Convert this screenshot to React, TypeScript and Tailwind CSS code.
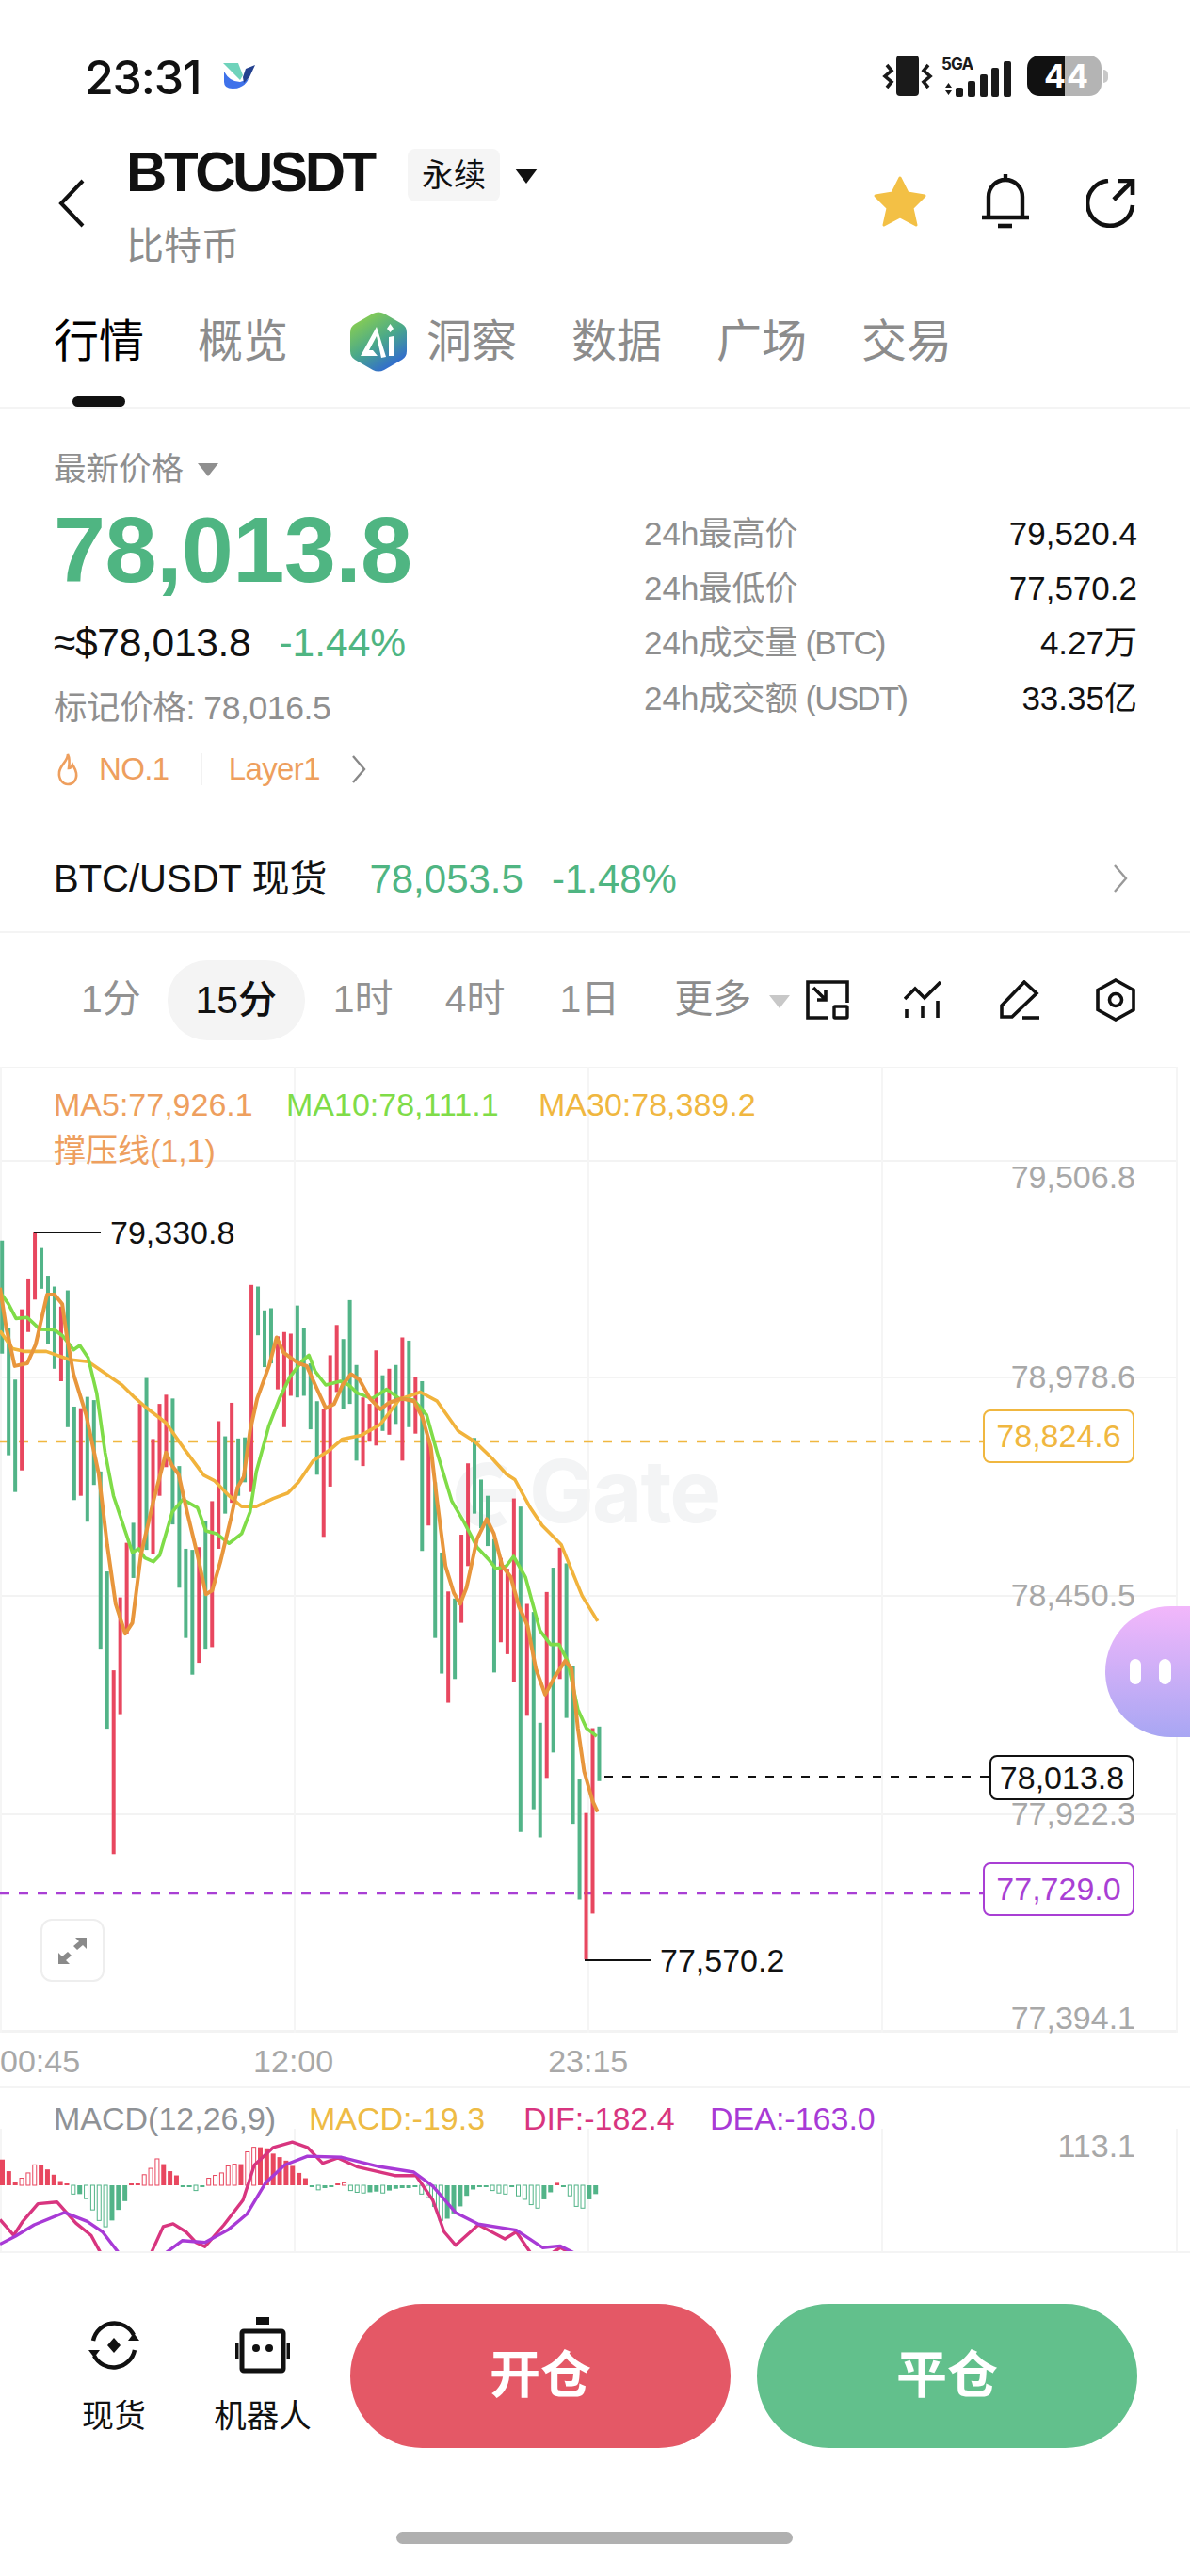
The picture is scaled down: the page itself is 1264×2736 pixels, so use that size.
import React from "react";

type Pt = [number, number];

const GREEN = "#52b488";
const RED = "#e8475f";

// x index is derived from the slot, values are [colour, top, bottom] read off the reference
const candles: [string, number, number][] = [
  ["g",118,327],["g",280,515],["g",375,583],["r",245,543],["r",188,287],["r",103,227],["g",130,207],["g",183,310],
  ["g",203,355],["r",240,378],["g",210,463],["g",425,598],["r",428,590],["g",407,638],["g",413,570],["g",545,873],
  ["g",730,1021],["r",913,1253],["r",778,994],["r",677,845],["g",640,742],["r",420,690],["g",372,690],["r",485,697],
  ["r",420,590],["r",403,537],["g",410,643],["g",535,760],["g",688,853],["g",690,921],["r",685,899],["g",637,873],
  ["r",600,870],["r",452,688],["g",480,623],["r",418,603],["g",484,590],["g",482,565],["r",200,583],["g",203,293],
  ["g",247,352],["g",243,345],["r",295,393],["r",287,463],["r",290,405],["g",238,408],["g",280,405],["g",345,467],
  ["g",415,551],["r",430,666],["r",330,573],["r",274,398],["g",300,429],["g",228,420],["g",348,525],["r",408,535],
  ["r",420,490],["r",321,497],["g",367,470],["r",355,477],["g",348,457],["r",297,525],["g",303,463],["r",370,475],
  ["g",378,692],["r",485,645],["g",565,853],["g",695,919],["r",767,973],["g",780,929],["r",662,825],["r",530,720],
  ["g",483,623],["g",560,650],["g",590,683],["g",670,917],["r",705,861],["r",725,883],["r",595,935],["g",610,1212],
  ["r",790,997],["g",805,1170],["g",1010,1222],["r",768,1112],["g",723,1065],["r",686,929],["g",715,1001],["g",905,1197],
  ["g",1115,1337],["r",1177,1448],["r",1020,1363],["g",1017,1118],
];

const ma5: Pt[] = [[0,205],[15,280],[35,350],[65,345],[85,310],[112,218],[130,218],[148,235],[160,300],[175,365],[205,440],[235,550],[255,680],[275,790],[298,845],[315,825],[335,700],[365,600],[395,510],[410,535],[425,550],[445,620],[470,700],[490,772],[505,765],[525,710],[550,630],[565,575],[580,555],[595,470],[612,410],[640,350],[658,297],[675,325],[710,345],[730,350],[750,385],[775,428],[795,420],[815,385],[835,365],[855,375],[880,410],[905,430],[925,418],[955,410],[985,415],[1005,445],[1025,500],[1040,600],[1060,720],[1080,770],[1095,790],[1110,760],[1135,670],[1158,633],[1175,660],[1195,720],[1215,740],[1235,795],[1255,830],[1275,910],[1297,958],[1320,925],[1345,895],[1360,910],[1375,1020],[1390,1100],[1410,1155],[1422,1175]];
const ma10: Pt[] = [[0,213],[20,235],[38,262],[65,260],[95,282],[130,283],[150,295],[175,320],[190,312],[210,335],[230,400],[250,510],[270,590],[300,660],[315,695],[330,688],[345,705],[365,712],[380,700],[410,620],[435,597],[470,612],[490,655],[515,660],[545,678],[575,660],[595,620],[610,545],[640,460],[665,410],[690,370],[720,340],[735,330],[750,360],[775,385],[810,378],[830,385],[850,400],[885,410],[920,393],[950,410],[985,413],[1015,440],[1040,510],[1075,600],[1105,640],[1135,685],[1165,710],[1180,725],[1205,720],[1222,702],[1250,740],[1285,840],[1310,865],[1330,865],[1350,895],[1375,985],[1395,1020],[1420,1035]];
const ma30: Pt[] = [[0,285],[30,318],[60,323],[110,323],[165,338],[210,342],[240,358],[290,385],[320,408],[345,425],[395,455],[440,505],[485,552],[510,562],[545,590],[575,610],[610,610],[650,595],[685,585],[710,565],[745,525],[785,505],[815,485],[860,478],[905,458],[950,412],[1000,398],[1040,415],[1090,470],[1130,490],[1170,520],[1205,550],[1225,560],[1260,610],[1290,645],[1335,680],[1385,775],[1422,822]];

const hist = [73,40,10,20,35,58,58,45,30,12,5,-25,-25,-38,-70,-100,-118,-100,-70,-45,5,5,30,48,75,60,40,28,-3,-3,-15,-1,20,28,35,55,60,60,95,108,108,105,90,80,70,55,35,20,-3,-13,-8,-3,3,7,-15,-20,-22,-20,-18,-22,-15,-10,-8,-8,-5,-25,-35,-60,-100,-95,-80,-60,-30,-12,-5,-3,-15,-22,-25,-5,-30,-40,-55,-65,-40,-20,7,-1,-30,-60,-65,-40,-25];

const difA: Pt[] = [[0,555],[18,600],[30,560],[50,510],[75,505],[100,565],[120,600],[135,660]];
const difB: Pt[] = [[197,660],[215,575],[228,567],[245,590],[258,620],[270,632],[295,570],[320,500],[335,400],[360,350],[385,335],[405,350],[425,395],[445,380],[470,405],[520,430],[548,430],[570,500],[585,590],[600,628],[630,570],[665,610],[680,590],[702,660]];
const difC: Pt[] = [[720,660],[738,635],[760,660]];
const deaA: Pt[] = [[0,625],[20,603],[45,570],[85,535],[115,560],[135,590],[160,660]];
const deaB: Pt[] = [[212,660],[240,615],[270,620],[300,585],[325,540],[350,450],[375,400],[405,375],[450,378],[500,405],[545,420],[570,460],[600,535],[630,568],[680,585],[715,635],[738,630],[765,660]];

// reference crop coords to chart px (chart box starts at y=1133)
const cx = (x: number) => x / 2.24;
const cy = (y: number) => 117 + y / 1.742;
const chartLine = (p: Pt[]) => p.map(([x, y]) => `${cx(x).toFixed(1)},${cy(y).toFixed(1)}`).join(" ");
// same for the MACD panel (starts at y=2218)
const macdLine = (p: Pt[]) => p.map(([x, y]) => `${(x / 1.24).toFixed(1)},${(y / 2.676 - 68).toFixed(1)}`).join(" ");

const Tab: React.FC<{ label: string; className: string; active?: boolean }> = ({ label, className, active }) => (
  <span className={`text-[48px] leading-[64px] ${active ? "text-black" : "text-[#8c8c8c]"} ${className}`}>{label}</span>
);

const StatRow: React.FC<{ label: string; unit?: string; value: string }> = ({ label, unit, value }) => (
  <div className="flex justify-between items-center h-[58.3px] text-[35px]">
    <span className="text-[#8f8f8f]">
      {label}
      {unit && <span className="ml-[8px] tracking-[-1.8px]">{unit}</span>}
    </span>
    <span className="text-[#111]">{value}</span>
  </div>
);

const Chevron: React.FC<{ className: string; color: string }> = ({ className, color }) => (
  <svg viewBox="0 0 16 32" className={className} fill="none" stroke={color} strokeWidth="2.4">
    <path d="M2 2 L14 16 L2 30" />
  </svg>
);

const StatusBar: React.FC = () => (
  <div className="h-[140px] flex items-start pt-[60px] pl-[90px]">
    <span className="text-[50px] leading-[44px] font-medium tracking-[-1.2px] text-[#111] font-['Inter',sans-serif]">23:31</span>
    <svg viewBox="0 0 36 28" className="w-[36px] h-[28px] ml-[22px] mt-[7px]">
      <path d="M3 9 L3 20 Q3 27 12 27 Q24 27 29 17 L20 20 Q9 20 3 9Z" fill="#3f72ea" />
      <path d="M23 15 L26 6 L36 2 L30 15 L24 21Z" fill="#24418f" />
      <path d="M2 0 H18 L23 13 L20 18Z" fill="#6fd3bb" />
    </svg>
    <div className="ml-auto flex items-start mr-[87px]">
      <svg viewBox="0 0 54 44" className="w-[54px] h-[44px] mt-[-1px]">
        <rect x="15" y="0" width="24" height="43" rx="4" fill="#1a1a1a" />
        <path d="M5 10 L10 16 L3 22 L10 28 L5 34" fill="none" stroke="#1a1a1a" strokeWidth="3.6" />
        <path d="M49 10 L44 16 L51 22 L44 28 L49 34" fill="none" stroke="#1a1a1a" strokeWidth="3.6" />
      </svg>
      <div className="relative w-[76px] h-[44px] ml-[9px]">
        <span className="absolute left-0 top-[-1px] text-[17px] leading-[18px] font-bold text-[#1a1a1a] font-['Inter',sans-serif] tracking-[-0.8px]">5GA</span>
        <svg viewBox="0 0 76 44" className="w-[76px] h-[44px]">
          <path d="M4 33 H11 L7.5 28Z M4 36 H11 L7.5 41Z" fill="#1a1a1a" />
          <rect x="15" y="33" width="8" height="10" rx="2" fill="#1a1a1a" />
          <rect x="28" y="26" width="8" height="17" rx="2" fill="#1a1a1a" />
          <rect x="41" y="19" width="8" height="24" rx="2" fill="#1a1a1a" />
          <rect x="53" y="12" width="8" height="31" rx="2" fill="#1a1a1a" />
          <rect x="66" y="5" width="8" height="38" rx="2" fill="#1a1a1a" />
        </svg>
      </div>
      <div className="relative ml-[15px] w-[79px] h-[43px] rounded-[13px] overflow-hidden flex mt-[-1px]">
        <div className="w-[40px] bg-[#111]" />
        <div className="flex-1 bg-[#b4b4b4]" />
        <span className="absolute inset-0 pl-[18px] text-[34px] leading-[43px] font-bold text-white font-['Inter',sans-serif] tracking-[1px]">44</span>
      </div>
      <div className="w-[5px] h-[14px] mt-[14px] ml-[2px] rounded-r-full bg-[#c8c8c8]" />
    </div>
  </div>
);

const Header: React.FC = () => (
  <div className="h-[160px] flex items-start pl-[62px]">
    <svg viewBox="0 0 28 52" className="w-[28px] h-[52px] mt-[50px]" fill="none" stroke="#111" strokeWidth="4">
      <path d="M26 2 L3 26 L26 50" />
    </svg>
    <div className="ml-[44px] flex flex-col">
      <div className="flex items-center h-[56px] mt-[18px]">
        <span className="w-[264px] mt-[-7px] whitespace-nowrap text-[60px] leading-[56px] font-bold text-[#111] tracking-[-3.4px]">BTCUSDT</span>
        <span className="ml-[35px] w-[98px] h-[56px] rounded-lg bg-[#f5f5f5] text-[34px] leading-[56px] text-center text-[#111]">永续</span>
        <div className="ml-[16px] mt-[2px] w-0 h-0 border-x-[12px] border-x-transparent border-t-[16px] border-t-[#111]" />
      </div>
      <span className="text-[40px] leading-[50px] mt-[22px] text-[#8c8c8c]">比特币</span>
    </div>
    <div className="ml-auto mr-[58px] mt-[46px] flex items-start">
      <svg viewBox="0 0 58 56" className="w-[58px] h-[56px]">
        <path d="M29 3 L37 19 L55 22 L42 35 L46 53 L29 44 L12 53 L16 35 L3 22 L21 19Z" fill="#f3c045" stroke="#f3c045" strokeWidth="3" strokeLinejoin="round" />
      </svg>
      <svg viewBox="0 0 50 58" className="w-[50px] h-[58px] ml-[58px] mt-[-1px]" fill="none" stroke="#111" strokeWidth="4.4">
        <path d="M25 0 V6 M7 46 V24 A18 18 0 0 1 43 24 V46 M0 46 H50" />
        <path d="M17 55 H32" strokeWidth="4.6" />
      </svg>
      <svg viewBox="0 0 52 52" className="w-[52px] h-[52px] ml-[61px] mt-[4px]" fill="none" stroke="#111" strokeWidth="4.6">
        <path d="M23 2 A24 24 0 1 0 49 28" />
        <path d="M29 22 L48 3 M33 2 H49 V17" />
      </svg>
    </div>
  </div>
);

const Tabs: React.FC = () => (
  <div className="relative h-[134px] border-b-[2px] border-[#f4f4f4] flex items-start pt-[31px] pl-[57px]">
    <Tab label="行情" className="" active />
    <Tab label="概览" className="ml-[57px]" />
    <svg viewBox="0 0 60 64" className="w-[60px] h-[64px] ml-[66px]">
      <defs>
        <linearGradient id="ai" x1="0.2" y1="0" x2="0.8" y2="1">
          <stop offset="0" stopColor="#8fd24c" />
          <stop offset="0.5" stopColor="#4aa88a" />
          <stop offset="1" stopColor="#2c5fdc" />
        </linearGradient>
      </defs>
      <path d="M24 2 Q30 -1 36 2 L55 13 Q60 16 60 22 L60 42 Q60 48 55 51 L36 62 Q30 65 24 62 L5 51 Q0 48 0 42 L0 22 Q0 16 5 13Z" fill="url(#ai)" />
      <path d="M28 16 L11 47 L29 47 L24 41 L20 41 L28 26 L33 49 L38 48Z" fill="#fff" />
      <path d="M41 27 L46 26 L46 47 L41 47Z M42.5 13 L46 18 L42.5 22 L39 18Z" fill="#fff" />
    </svg>
    <Tab label="洞察" className="ml-[21px]" />
    <Tab label="数据" className="ml-[58px]" />
    <Tab label="广场" className="ml-[58px]" />
    <Tab label="交易" className="ml-[58px]" />
    <div className="absolute left-[77px] bottom-0 w-[56px] h-[11px] rounded-full bg-[#111]" />
  </div>
);

const Market: React.FC = () => (
  <div className="h-[557px] border-b-[2px] border-[#f4f4f4] flex flex-col">
    <div className="flex h-[405px] px-[57px] pr-[56px]">
      <div className="w-[627px] flex flex-col">
        <div className="flex items-center h-[40px] mt-[45px]">
          <span className="text-[34.5px] text-[#8f8f8f]">最新价格</span>
          <div className="ml-[15px] w-0 h-0 border-x-[11px] border-x-transparent border-t-[14px] border-t-[#8f8f8f]" />
        </div>
        <div className="h-[90px] mt-[20px] text-[99px] leading-[90px] font-bold tracking-[-0.6px] text-[#4fb582]">78,013.8</div>
        <div className="flex items-center h-[50px] mt-[29px] text-[42.5px]">
          <span className="text-[#111] tracking-[-0.3px]">≈$78,013.8</span>
          <span className="ml-[30px] text-[#4fb582]">-1.44%</span>
        </div>
        <div className="h-[44px] mt-[22px] text-[35.5px] leading-[44px] tracking-[-0.4px] text-[#8f8f8f]">标记价格: 78,016.5</div>
        <div className="flex items-center h-[44px] mt-[21px] text-[33px] text-[#ee9f5e]">
          <svg viewBox="0 0 24 36" className="w-[24px] h-[36px] ml-[3px]" fill="none" stroke="#ee9f5e" strokeWidth="2.6">
            <path d="M12 2 C12 10 4 13 3 21 C2 29 7 34 12 34 C18 34 22 29 21 22 C20.5 18 18 15 17 13 C16 16 14 17 13 17 C14 11 14 6 12 2Z" />
          </svg>
          <span className="ml-[21px] tracking-[-0.6px]">NO.1</span>
          <div className="ml-[33px] w-[2px] h-[34px] bg-[#f2f2f2]" />
          <span className="ml-[28px] tracking-[-0.6px]">Layer1</span>
          <Chevron className="w-[16px] h-[32px] ml-[33px]" color="#888" />
        </div>
      </div>
      <div className="w-[524px] pt-[104px]">
        <StatRow label="24h最高价" value="79,520.4" />
        <StatRow label="24h最低价" value="77,570.2" />
        <StatRow label="24h成交量" unit="(BTC)" value="4.27万" />
        <StatRow label="24h成交额" unit="(USDT)" value="33.35亿" />
      </div>
    </div>
    <div className="mt-[38px] h-[112px] flex items-center pl-[57px] pr-[66px] text-[42px]">
      <span className="text-[#111] text-[40px]">BTC/USDT 现货</span>
      <span className="ml-[45px] text-[#4fb582]">78,053.5</span>
      <span className="ml-[30px] text-[#4fb582]">-1.48%</span>
      <Chevron className="ml-auto w-[16px] h-[32px]" color="#999" />
    </div>
  </div>
);

const Periods: React.FC = () => (
  <div className="h-[142px] flex items-center text-[41px] text-[#929292]">
    <span className="ml-[86px]">1分</span>
    <span className="ml-[28px] w-[146px] h-[85px] rounded-[42px] bg-[#f4f4f4] font-medium text-[#111] text-center leading-[85px]">15分</span>
    <span className="ml-[30px]">1时</span>
    <span className="ml-[55px]">4时</span>
    <span className="ml-[58px]">1日</span>
    <span className="ml-[58px] text-[#8c8c8c]">更多</span>
    <div className="ml-[19px] mt-[4px] w-0 h-0 border-x-[11px] border-x-transparent border-t-[14px] border-t-[#c8c8c8]" />
    <svg viewBox="0 0 46 42" className="w-[46px] h-[42px] ml-[17px]" fill="none" stroke="#111" strokeWidth="3.6">
      <path d="M24 40 H2 V2 H44 V24" />
      <rect x="30" y="28" width="14" height="12" strokeWidth="3.4" rx="1" />
      <path d="M8 8 L21 21 M12 21 H21 V11" />
    </svg>
    <svg viewBox="0 0 40 40" className="w-[40px] h-[40px] ml-[58px]" fill="none" stroke="#111" strokeWidth="3.6">
      <path d="M1 19 L12 8 L22 18 L39 1" />
      <path d="M3 30 V39 M20 26 V39 M36 21 V39" />
    </svg>
    <svg viewBox="0 0 42 42" className="w-[42px] h-[42px] ml-[62px]" fill="none" stroke="#111" strokeWidth="3.6">
      <path d="M26 2 L39 14 L13 39 H2 V27Z" />
      <path d="M24 40 H42" />
    </svg>
    <svg viewBox="0 0 42 46" className="w-[42px] h-[46px] ml-[60px]" fill="none" stroke="#111" strokeWidth="3.6">
      <path d="M21 2 L40 12.5 V33.5 L21 44 L2 33.5 V12.5Z" />
      <circle cx="21" cy="23" r="6.5" />
    </svg>
  </div>
);

const PriceChart: React.FC = () => (
  <div className="relative h-[1026px] text-[34px] leading-[40px]">
    <svg className="absolute inset-0 w-[1264px] h-[1026px]" viewBox="0 0 1264 1026">
      {[0, 100, 330, 562, 794, 1025].map((y) => (
        <line key={y} x1="0" x2="1250" y1={y} y2={y} stroke="#f3f3f3" strokeWidth={y === 1025 ? 4 : 2} />
      ))}
      {[1, 313, 625, 937, 1250].map((x) => (
        <line key={x} x1={x} x2={x} y1="0" y2="1026" stroke="#f5f5f5" strokeWidth="2" />
      ))}
      <path d="M535 432 A28 28 0 1 0 535 478 M512 455 H548" fill="none" stroke="#f3f4f5" strokeWidth="14" />
      <line x1="0" x2="1044" y1="398" y2="398" stroke="#f0b740" strokeWidth="2.6" strokeDasharray="10 10" />
      <line x1="0" x2="1044" y1="878" y2="878" stroke="#a93fd4" strokeWidth="2.6" strokeDasharray="10 10" />
      <line x1="642" x2="1051" y1="754" y2="754" stroke="#111" strokeWidth="2" strokeDasharray="9 10" />
      {candles.map(([c, t, b], i) => (
        <rect key={i} x={2.2 + i * 6.97 - 2} y={cy(t)} width="4" height={(b - t) / 1.742} fill={c === "g" ? GREEN : RED} />
      ))}
      <path d="M36 176 H107 M621 949 H691" stroke="#111" strokeWidth="2" fill="none" />
      <polyline points={chartLine(ma30)} fill="none" stroke="#f1b33c" strokeWidth="3.6" strokeLinejoin="round" />
      <polyline points={chartLine(ma10)} fill="none" stroke="#7fdc48" strokeWidth="3.6" strokeLinejoin="round" />
      <polyline points={chartLine(ma5)} fill="none" stroke="#e8963c" strokeWidth="4" strokeLinejoin="round" />
    </svg>

    <span className="absolute left-[562px] top-[405px] text-[92px] leading-[92px] font-bold text-[#f3f4f5] font-['Inter',sans-serif] tracking-[-2px] -z-10">Gate</span>

    <div className="absolute left-[57px] top-[20px] flex">
      <span className="w-[247px] text-[#ee9f5e]">MA5:77,926.1</span>
      <span className="w-[268px] text-[#7fdc48]">MA10:78,111.1</span>
      <span className="text-[#f0b740]">MA30:78,389.2</span>
    </div>
    <span className="absolute left-[57px] top-[69px] text-[#ee9f5e]">撑压线(1,1)</span>

    <span className="absolute right-[58px] top-[97px] text-[#a8a8a8]">79,506.8</span>
    <span className="absolute right-[58px] top-[309px] text-[#a8a8a8]">78,978.6</span>
    <span className="absolute right-[58px] top-[541px] text-[#a8a8a8]">78,450.5</span>
    <span className="absolute right-[58px] top-[773px] text-[#a8a8a8]">77,922.3</span>
    <span className="absolute right-[58px] top-[990px] text-[#a8a8a8]">77,394.1</span>

    <span className="absolute left-[117px] top-[156px] text-[#111]">79,330.8</span>
    <span className="absolute left-[701px] top-[929px] text-[#111]">77,570.2</span>

    <span className="absolute left-[1044px] top-[364px] w-[161px] h-[57px] rounded-lg border-2 border-[#f0b740] bg-white text-center leading-[53px] text-[#f0b740]">78,824.6</span>
    <span className="absolute left-[1051px] top-[731px] w-[154px] h-[48px] rounded-lg border-2 border-[#111] bg-white text-center leading-[44px] text-[#111]">78,013.8</span>
    <span className="absolute left-[1044px] top-[845px] w-[161px] h-[57px] rounded-lg border-2 border-[#a93fd4] bg-white text-center leading-[53px] text-[#a93fd4]">77,729.0</span>

    <div className="absolute left-[43px] top-[905px] w-[68px] h-[67px] rounded-xl border-2 border-[#eeeeee] bg-white flex items-center justify-center">
      <svg viewBox="0 0 32 32" className="w-[32px] h-[32px]" fill="#8a8a8a">
        <path d="M19 2 H31 V14 L27 10 L21 15 L17 11 L23 6Z M1 30 V18 L5 22 L11 17 L15 21 L9 26 L13 30Z" />
      </svg>
    </div>

    <div className="absolute left-[1174px] top-[573px] w-[90px] h-[139px] rounded-l-[70px] bg-gradient-to-b from-[#f2b7fb] to-[#a8a6f3] flex items-center pl-[26px] gap-[19px]">
      <div className="w-[12px] h-[27px] rounded-full bg-white" />
      <div className="w-[13px] h-[27px] rounded-full bg-white" />
    </div>
  </div>
);

const TimeAxis: React.FC = () => (
  <div className="h-[59px] pt-[4px] border-b-[2px] border-[#f4f4f4] flex items-center text-[34px] text-[#a8a8a8]">
    <span>00:45</span>
    <span className="ml-[184px]">12:00</span>
    <span className="ml-[228px]">23:15</span>
  </div>
);

const Macd: React.FC = () => (
  <div className="relative h-[175px] overflow-hidden border-b-[2px] border-[#f4f4f4]">
    <svg className="absolute inset-0 w-[1264px] h-[175px]" viewBox="0 0 1264 175">
      {[1, 313, 625, 937, 1250].map((x) => (
        <line key={x} x1={x} x2={x} y1="43" y2="175" stroke="#f5f5f5" strokeWidth="2" />
      ))}
      {hist.map((h, i) => {
        const color = h > 0 ? RED : GREEN;
        const len = Math.max(Math.abs(h) / 2.676, 2);
        const hollow = i > 0 && Math.abs(h) > Math.abs(hist[i - 1]);
        const x = i * 6.85;
        return hollow ? (
          <rect key={i} x={x + 0.5} y={h > 0 ? 103 - len : 103} width="4" height={len} fill="#fff" stroke={color} strokeWidth="1" />
        ) : (
          <rect key={i} x={x} y={h > 0 ? 103 - len : 103} width="5" height={len} fill={color} />
        );
      })}
      {[difA, difB, difC].map((p, i) => (
        <polyline key={i} points={macdLine(p)} fill="none" stroke="#d8357f" strokeWidth="3.4" strokeLinejoin="round" />
      ))}
      {[deaA, deaB].map((p, i) => (
        <polyline key={i} points={macdLine(p)} fill="none" stroke="#a83ad6" strokeWidth="3.4" strokeLinejoin="round" />
      ))}
    </svg>
    <div className="absolute left-[57px] top-[12px] flex text-[34px] leading-[40px]">
      <span className="w-[271px] text-[#8f9296]">MACD(12,26,9)</span>
      <span className="w-[228px] text-[#eebb45]">MACD:-19.3</span>
      <span className="w-[198px] text-[#d8357f]">DIF:-182.4</span>
      <span className="text-[#a83ad6]">DEA:-163.0</span>
    </div>
    <span className="absolute right-[58px] top-[41px] text-[34px] leading-[40px] text-[#a8a8a8]">113.1</span>
  </div>
);

const BottomBar: React.FC = () => (
  <div className="flex-1 relative flex items-start pt-[54px]">
    <div className="ml-[71px] w-[100px] flex flex-col items-center">
      <svg viewBox="0 0 58 60" className="w-[58px] h-[60px] mt-[14px]" fill="none" stroke="#111" strokeWidth="4.4">
        <path d="M7 25 A23 23 0 0 1 50 19" />
        <path d="M51 35 A23 23 0 0 1 8 41" />
        <path d="M44 25 H56 L50 17Z M14 35 H2 L8 43Z" fill="#111" stroke="none" />
        <path d="M29 22 L36 30 L29 38 L22 30Z" fill="#111" stroke="none" />
      </svg>
      <span className="mt-[23px] text-[34px] leading-[44px] text-[#111]">现货</span>
    </div>
    <div className="ml-[48px] w-[120px] flex flex-col items-center">
      <svg viewBox="0 0 58 60" className="w-[58px] h-[60px] mt-[14px]" fill="none" stroke="#111" strokeWidth="5">
        <rect x="7" y="15" width="44" height="42" rx="2" />
        <path d="M22 0 H36 V8 H22Z" fill="#111" stroke="none" />
        <path d="M1 28 V44 M57 28 V44" />
        <circle cx="22" cy="33" r="4" fill="#111" stroke="none" />
        <circle cx="36" cy="33" r="4" fill="#111" stroke="none" />
      </svg>
      <span className="mt-[23px] text-[34.5px] leading-[44px] text-[#111]">机器人</span>
    </div>
    <button className="ml-[33px] w-[404px] h-[153px] rounded-full bg-[#e45866] text-white text-[54px] font-bold">开仓</button>
    <button className="ml-[28px] w-[404px] h-[153px] rounded-full bg-[#62c08c] text-white text-[54px] font-bold">平仓</button>
    <div className="absolute left-[421px] top-[296px] w-[421px] h-[13px] rounded-full bg-[#b0b0b0]" />
  </div>
);

export default function App() {
  return (
    <div className="isolate w-[1264px] h-[2736px] bg-white overflow-hidden flex flex-col font-['Liberation_Sans','Noto_Sans_CJK_SC',sans-serif]">
      <StatusBar />
      <Header />
      <Tabs />
      <Market />
      <Periods />
      <PriceChart />
      <TimeAxis />
      <Macd />
      <BottomBar />
    </div>
  );
}
